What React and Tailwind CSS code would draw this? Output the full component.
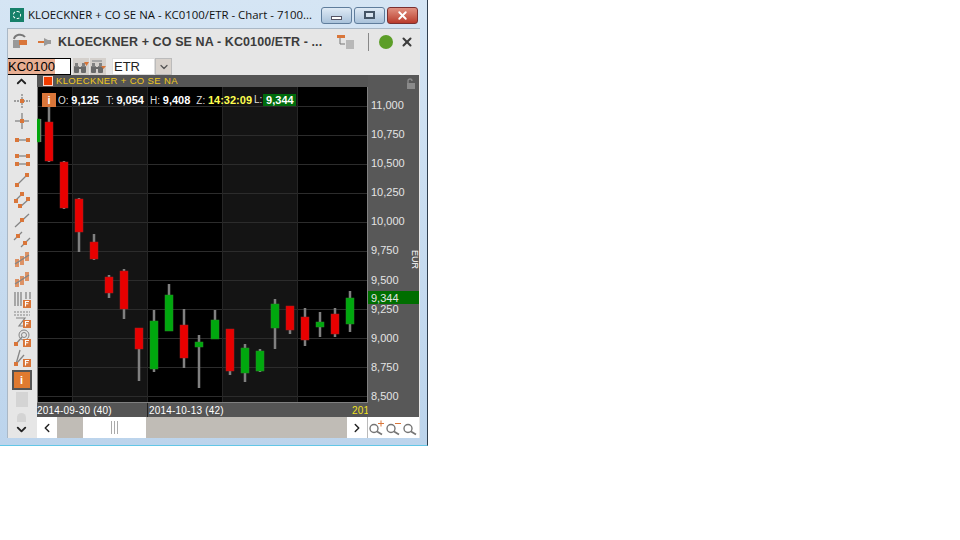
import { ChevronUp, ChevronDown, ChevronLeft, ChevronRight, X } from "lucide-react";

const candles = [
  { x: 36, w: 4, top: 119, bottom: 142, hi: 119, lo: 142, up: true },
  { x: 45, top: 122, bottom: 161, hi: 105, lo: 162 },
  { x: 60, top: 162, bottom: 208, hi: 161, lo: 209 },
  { x: 75, top: 199, bottom: 232, hi: 198, lo: 252 },
  { x: 90, top: 242, bottom: 259, hi: 234, lo: 260 },
  { x: 105, top: 277, bottom: 293, hi: 275, lo: 298 },
  { x: 120, top: 271, bottom: 309, hi: 269, lo: 319 },
  { x: 135, top: 328, bottom: 349, hi: 328, lo: 381 },
  { x: 150, top: 321, bottom: 369, hi: 310, lo: 372, up: true },
  { x: 165, top: 295, bottom: 331, hi: 284, lo: 331, up: true },
  { x: 180, top: 325, bottom: 358, hi: 309, lo: 368 },
  { x: 195, top: 342, bottom: 347, hi: 335, lo: 388, up: true },
  { x: 211, top: 320, bottom: 339, hi: 310, lo: 339, up: true },
  { x: 226, top: 329, bottom: 371, hi: 329, lo: 375 },
  { x: 241, top: 348, bottom: 373, hi: 344, lo: 382, up: true },
  { x: 256, top: 351, bottom: 371, hi: 349, lo: 372, up: true },
  { x: 271, top: 304, bottom: 328, hi: 299, lo: 349, up: true },
  { x: 286, top: 306, bottom: 330, hi: 306, lo: 334 },
  { x: 301, top: 317, bottom: 340, hi: 308, lo: 346 },
  { x: 316, top: 322, bottom: 327, hi: 312, lo: 337, up: true },
  { x: 331, top: 314, bottom: 334, hi: 308, lo: 337 },
  { x: 346, top: 298, bottom: 324, hi: 291, lo: 332, up: true },
];

const gridY = [106, 135, 164, 193, 222, 251, 280, 309, 338, 367, 396];
const prices = ["11,000", "10,750", "10,500", "10,250", "10,000", "9,750", "9,500", "9,250", "9,000", "8,750", "8,500"];

const OR = "#d9763a";
const GR = "#858585";

// small square-ended drawing tools
const Line = ({ x1, y1, x2, y2, dash }) => (
  <line x1={x1} y1={y1} x2={x2} y2={y2} stroke={GR} strokeWidth="1.3" strokeDasharray={dash} />
);
const Dot = ({ x, y, s = 4 }) => <rect x={x - s / 2} y={y - s / 2} width={s} height={s} fill={OR} />;
const FBadge = () => (
  <g>
    <rect x="10" y="10" width="8" height="8" fill={OR} />
    <path d="M12.5 16.5v-5h3.5M12.5 13.8h2.8" stroke="#fff" strokeWidth="1.1" fill="none" />
  </g>
);

const tools = [
  <>
    <Line x1="1" y1="9" x2="17" y2="9" dash="2 1" />
    <Line x1="9" y1="2" x2="9" y2="16" dash="2 1" />
    <Dot x={9} y={9} />
  </>,
  <>
    <Line x1="2" y1="9" x2="16" y2="9" />
    <Line x1="9" y1="1" x2="9" y2="17" />
    <Dot x={9} y={9} />
  </>,
  <>
    <Line x1="3" y1="9" x2="15" y2="9" />
    <Dot x={4} y={9} />
    <Dot x={15} y={9} />
  </>,
  <>
    <Line x1="3" y1="5" x2="15" y2="5" />
    <Line x1="3" y1="13" x2="15" y2="13" />
    <Dot x={4} y={5} />
    <Dot x={15} y={5} />
    <Dot x={4} y={13} />
    <Dot x={15} y={13} />
  </>,
  <>
    <Line x1="4" y1="14" x2="14" y2="4" />
    <Dot x={4} y={14} />
    <Dot x={14} y={4} />
  </>,
  <>
    <Line x1="2" y1="10" x2="10" y2="2" />
    <Line x1="7" y1="16" x2="16" y2="8" />
    <Dot x={3} y={10} />
    <Dot x={9} y={3} />
    <Dot x={7} y={15} />
    <Dot x={15} y={8} />
  </>,
  <>
    <Line x1="2" y1="16" x2="16" y2="3" />
    <Dot x={9} y={9} />
  </>,
  <>
    <Line x1="1" y1="10" x2="9" y2="2" />
    <Line x1="8" y1="17" x2="17" y2="8" />
    <Dot x={5} y={6} />
    <Dot x={12} y={13} />
  </>,
  <>
    <rect x="2" y="9" width="4" height="8" fill={OR} opacity=".75" />
    <rect x="7" y="6" width="4" height="9" fill={OR} opacity=".75" />
    <rect x="12" y="2" width="4" height="9" fill={OR} opacity=".75" />
    <Line x1="2" y1="14" x2="16" y2="5" />
  </>,
  <>
    <rect x="2" y="9" width="4" height="8" fill={OR} opacity=".75" />
    <rect x="7" y="6" width="4" height="9" fill={OR} opacity=".75" />
    <rect x="12" y="2" width="4" height="9" fill={OR} opacity=".75" />
    <Line x1="2" y1="14" x2="16" y2="5" />
  </>,
  <>
    <Line x1="2" y1="2" x2="2" y2="16" />
    <Line x1="5" y1="2" x2="5" y2="16" />
    <Line x1="8" y1="2" x2="8" y2="16" />
    <Line x1="13" y1="2" x2="13" y2="9" />
    <Line x1="17" y1="2" x2="17" y2="9" />
    <FBadge />
  </>,
  <>
    <path d="M1 2h16M1 5h16" stroke={GR} strokeDasharray="2 1" />
    <path d="M3 8h9L6 16h6" stroke={GR} strokeWidth="1.2" fill="none" />
    <FBadge />
  </>,
  <>
    <circle cx="11" cy="6" r="5" stroke={GR} fill="none" />
    <circle cx="11" cy="6" r="2.5" stroke={GR} fill="none" />
    <Line x1="3" y1="15" x2="9" y2="8" />
    <Dot x={3} y={15} />
    <FBadge />
  </>,
  <>
    <Line x1="3" y1="15" x2="7" y2="1" />
    <Line x1="3" y1="15" x2="11" y2="6" />
    <Dot x={3} y={15} />
    <FBadge />
  </>,
];

function ToolIcon({ children }) {
  return (
    <div className="h-5 flex items-center justify-center">
      <svg width="18" height="18" viewBox="0 0 18 18">
        {children}
      </svg>
    </div>
  );
}

function WinButton({ className, children }) {
  return (
    <div className={`w-[31px] h-[17px] rounded-[3px] border flex items-center justify-center ${className}`}>
      {children}
    </div>
  );
}

function Magnifier({ mark }) {
  return (
    <svg width="17" height="16" viewBox="0 0 17 16">
      <circle cx="6" cy="8.5" r="4" stroke="#757575" strokeWidth="1.4" fill="none" />
      <line x1="9" y1="11.5" x2="14" y2="14.5" stroke="#757575" strokeWidth="1.8" />
      {mark === "plus" && <path d="M10 3.5h6M13 .5v6" stroke={OR} strokeWidth="1" />}
      {mark === "minus" && <path d="M10 3.5h6" stroke={OR} strokeWidth="1" />}
    </svg>
  );
}

function BinocularIcon({ topBar }) {
  return (
    <svg width="16" height="16" viewBox="0 0 16 16">
      {topBar && <rect x="2" y="1" width="10" height="2" fill="#a8a8a8" />}
      <rect x="1" y="7" width="5" height="7" rx="1" fill="#6a6a6a" />
      <rect x="8" y="7" width="5" height="7" rx="1" fill="#6a6a6a" />
      <rect x="2" y="4" width="3" height="4" fill="#808080" />
      <rect x="9" y="4" width="3" height="4" fill="#808080" />
      <rect x="5" y="8" width="4" height="2" fill="#6a6a6a" />
      <path d={topBar ? "M11 7h5l-2.5 3z" : "M11 3h5l-2.5 4z"} fill={OR} />
    </svg>
  );
}

function LegendValue({ label, value, className = "ml-1.5" }) {
  return (
    <span className={`${className} text-[#dcdcdc]`}>
      {label}: <span className="font-bold text-[11px] text-white">{value}</span>
    </span>
  );
}

function Chart() {
  return (
    <svg width="331" height="316" viewBox="37 87 331 316" className="block">
      <rect x="37" y="87" width="331" height="316" fill="#000" />
      <rect x="72" y="87" width="75" height="316" fill="#141414" />
      <rect x="222" y="87" width="75" height="316" fill="#141414" />
      {gridY.map((y) => (
        <line key={y} x1="37" y1={y + 0.5} x2="367" y2={y + 0.5} stroke="#2c2c2c" />
      ))}
      {[72, 147, 222, 297].map((x) => (
        <line key={x} x1={x + 0.5} y1="87" x2={x + 0.5} y2="403" stroke="#262626" />
      ))}
      <rect x="37" y="87" width="1" height="316" fill="#808080" />
      <rect x="367" y="87" width="1" height="316" fill="#808080" />
      <rect x="37" y="402" width="331" height="1" fill="#808080" />
      {candles.map((c) => {
        const w = c.w || 8;
        return (
          <g key={c.x}>
            <rect x={c.x + 2.75} y={c.hi} width="2.5" height={c.lo - c.hi} fill="#808080" />
            <rect x={c.x} y={c.top} width={w} height={c.bottom - c.top} fill={c.up ? "#00a80e" : "#e80000"} stroke={c.up ? "#2a8a2a" : "#a02020"} strokeWidth=".5" />
          </g>
        );
      })}
    </svg>
  );
}

export default function App() {
  return (
    <div className="w-[960px] h-[540px] bg-white font-['Liberation_Sans',sans-serif]">
      <div className="w-[428px] h-[446px] flex flex-col bg-gradient-to-b from-[#d5e5f4] to-[#bcd4ec] border-r border-b border-r-[#2f3e4e] border-b-[#62c6e6]">
        {/* title bar */}
        <div className="h-7 flex items-center pl-[10px] pt-[2px] shrink-0">
          <div className="w-[14px] h-[14px] bg-[#16806a] flex items-center justify-center mr-1">
            <div className="w-2 h-2 border border-dashed border-white rounded-full" />
          </div>
          <span className="text-[11.4px] whitespace-nowrap text-[#111] font-['Open_Sans',sans-serif] w-[293px]">
            KLOECKNER + CO SE NA - KC0100/ETR - Chart - 7100...
          </span>
          <div className="flex gap-[2px]">
            <WinButton className="border-[#5f7d9c] bg-gradient-to-b from-[#dfeaf5] to-[#a9c2da]">
              <div className="w-[11px] h-1 mt-[6px] bg-white border border-[#556]" />
            </WinButton>
            <WinButton className="border-[#5f7d9c] bg-gradient-to-b from-[#dfeaf5] to-[#a9c2da]">
              <div className="w-[11px] h-2 bg-white/30 border-2 border-[#445566]" />
            </WinButton>
            <WinButton className="bg-gradient-to-b from-[#e09080] to-[#b93a2c] border-[#7a3030]">
              <X size={13} strokeWidth={3.5} className="text-white" />
            </WinButton>
          </div>
        </div>

        {/* client area */}
        <div className="ml-[7px] w-[413px] h-[410px] bg-[#e6e6e6] border-t border-l border-[#aab8c6] flex flex-col overflow-hidden">
          <div className="h-[26px] flex items-center shrink-0 pl-[3px]">
            <svg width="18" height="18" viewBox="0 0 18 18" className="mr-[8px]">
              <path d="M3 6a6 5 0 0 1 11-2" stroke="#777" strokeWidth="2" fill="none" />
              <rect x="2" y="7" width="7" height="8" fill="#999" />
              <rect x="8" y="7" width="8" height="5" fill={OR} />
            </svg>
            <svg width="16" height="14" viewBox="0 0 16 14" className="mr-[5px]">
              <rect x="1" y="6" width="6" height="2" fill={OR} />
              <path d="M7 3l4 2h3V9h-3l-4 2z" fill="#9a9a9a" />
            </svg>
            <span className="text-[12.5px] font-bold text-[#3c3c3c] whitespace-nowrap tracking-[0.1px] w-[279px]">
              KLOECKNER + CO SE NA - KC0100/ETR - ...
            </span>
            <svg width="18" height="16" viewBox="0 0 18 16">
              <rect x="0" y="1" width="8" height="3" fill={OR} />
              <path d="M3 4v6h5" stroke="#777" fill="none" />
              <rect x="9" y="6" width="8" height="9" fill="#b8b8b8" />
            </svg>
            <div className="w-px h-[18px] bg-[#888] ml-[13px]" />
            <div className="w-[14px] h-[14px] rounded-full bg-[#5c9e28] ml-[10px]" />
            <X size={14} strokeWidth={3.5} className="text-[#3c3c3c] ml-[7px]" />
          </div>

          <div className="h-[17px] flex items-center shrink-0 mt-[3px]">
            <div className="w-16 h-[17px] ml-[-1px] border border-black bg-white flex items-center">
              <span className="bg-[#e8ae92] text-[13px] leading-[15px] text-black">KC0100</span>
            </div>
            <div className="w-4 h-[17px] bg-[#d4d0cc] ml-[2px] flex items-center justify-center">
              <BinocularIcon />
            </div>
            <div className="w-4 h-[17px] bg-[#d4d0cc] ml-[1px] flex items-center justify-center">
              <BinocularIcon topBar />
            </div>
            <div className="w-[43px] h-[17px] ml-[6px] bg-white border border-[#ddd] text-[13px] leading-[15px] pl-[1px] text-[#222]">
              ETR
            </div>
            <div className="w-[17px] h-[17px] bg-[#d8d2cc] border border-[#bbb] flex items-center justify-center">
              <ChevronDown size={12} strokeWidth={2.5} className="text-[#555]" />
            </div>
          </div>

          <div className="flex flex-1 min-h-0">
            {/* drawing tools */}
            <div className="w-[29px] pr-[2px] shrink-0 flex flex-col items-center">
              <ChevronUp size={15} strokeWidth={3} className="text-[#222] mt-[-1px] mb-[2px]" />
              {tools.map((t, i) => (
                <ToolIcon key={i}>{t}</ToolIcon>
              ))}
              <div className="w-5 h-5 mt-[2px] shrink-0 border-2 border-[#555] bg-[#e07a30] flex items-center justify-center text-white text-[11px] font-bold">
                i
              </div>
              <div className="w-3 h-[15px] bg-[#d4d4d4] mt-[2px] shrink-0" />
              <div className="w-[9px] h-[9px] rounded-t-full bg-[#d4d4d4] mt-[6px] shrink-0" />
              <ChevronDown size={15} strokeWidth={3} className="text-[#222] mt-auto mb-[1px] shrink-0" />
            </div>

            <div className="flex-1 min-w-0 flex flex-col pr-[1px]">
              <div className="flex-1 flex min-h-0">
                <div className="w-[331px] flex flex-col bg-[#555] relative">
                  <div className="h-3 flex items-center pl-[6px] shrink-0">
                    <div className="w-[10px] h-[10px] bg-[#f03c00] border border-white/80" />
                    <span className="ml-[3px] text-[9.5px] leading-none tracking-[0.35px] text-[#f0c820]">
                      KLOECKNER + CO SE NA
                    </span>
                  </div>
                  <Chart />
                  <div className="absolute left-[5px] top-[18px] flex items-center text-[10px] leading-none">
                    <div className="w-[14px] h-[14px] bg-[#d9763a] text-white text-[11px] font-bold flex items-center justify-center">
                      i
                    </div>
                    <LegendValue label="O" value="9,125" className="ml-[2px]" />
                    <LegendValue label="T" value="9,054" className="ml-[7px]" />
                    <LegendValue label="H" value="9,408" />
                    <span className="ml-1.5 text-[#dcdcdc]">
                      Z: <span className="font-bold text-[11px] text-[#ffff50]">14:32:09</span>
                    </span>
                    <span className="ml-[2px] text-[#dcdcdc]">L:</span>
                    <span className="ml-[1px] w-[33px] text-center bg-[#006b0c] font-bold text-[11px] text-white leading-3">9,344</span>
                  </div>
                  <div className="h-[14px] flex items-center bg-[#555] text-[10px] text-white tracking-[0.2px] relative overflow-hidden shrink-0">
                    <span className="w-[111px] border-r border-[#222] h-full leading-[15px]">2014-09-30 (40)</span>
                    <span className="pl-[1px] leading-[15px]">2014-10-13 (42)</span>
                    <span className="absolute left-[315px] top-0 leading-[15px] text-[#f0e020]">201</span>
                  </div>
                </div>

                {/* price axis */}
                <div className="flex-1 bg-[#585858] relative flex flex-col pl-[3px] pt-[24px] text-[11px] text-[#e4e4e4]">
                  {prices.map((p) => (
                    <div key={p} className="h-[29.1px] leading-3 shrink-0">
                      {p}
                    </div>
                  ))}
                  <div className="absolute left-0 right-0 top-[216px] h-[13px] bg-[#006e00] pl-[3px] text-[11px] leading-[14px] text-[#e4e4e4]">
                    9,344
                  </div>
                  <span className="absolute right-0 top-[175px] text-[9px] leading-none text-white [writing-mode:vertical-rl]">
                    EUR
                  </span>
                  <svg width="10" height="11" viewBox="0 0 10 11" className="absolute right-[3px] top-[3px]">
                    <path d="M2 5V3a2 2 0 0 1 4 0" stroke="#8a8a8a" fill="none" strokeWidth="1.4" />
                    <rect x="1" y="5" width="8" height="6" fill="#8a8a8a" />
                  </svg>
                </div>
              </div>

              {/* scroll bar and zoom */}
              <div className="h-[21px] flex shrink-0 bg-white">
                <div className="w-5 flex items-center justify-center">
                  <ChevronLeft size={14} strokeWidth={2.5} className="text-[#222]" />
                </div>
                <div className="w-[290px] flex bg-[#c0bcb6]">
                  <div className="w-[26px]" />
                  <div className="w-[63px] bg-white flex items-center justify-center gap-[2px]">
                    <div className="w-px h-[13px] bg-[#aaa]" />
                    <div className="w-px h-[13px] bg-[#aaa]" />
                    <div className="w-px h-[13px] bg-[#aaa]" />
                  </div>
                </div>
                <div className="w-5 flex items-center justify-center">
                  <ChevronRight size={14} strokeWidth={2.5} className="text-[#222]" />
                </div>
                <div className="flex-1 flex items-center border-l border-[#bbb] bg-white">
                  <Magnifier mark="plus" />
                  <Magnifier mark="minus" />
                  <Magnifier />
                </div>
              </div>
            </div>
          </div>
        </div>
      </div>
    </div>
  );
}
